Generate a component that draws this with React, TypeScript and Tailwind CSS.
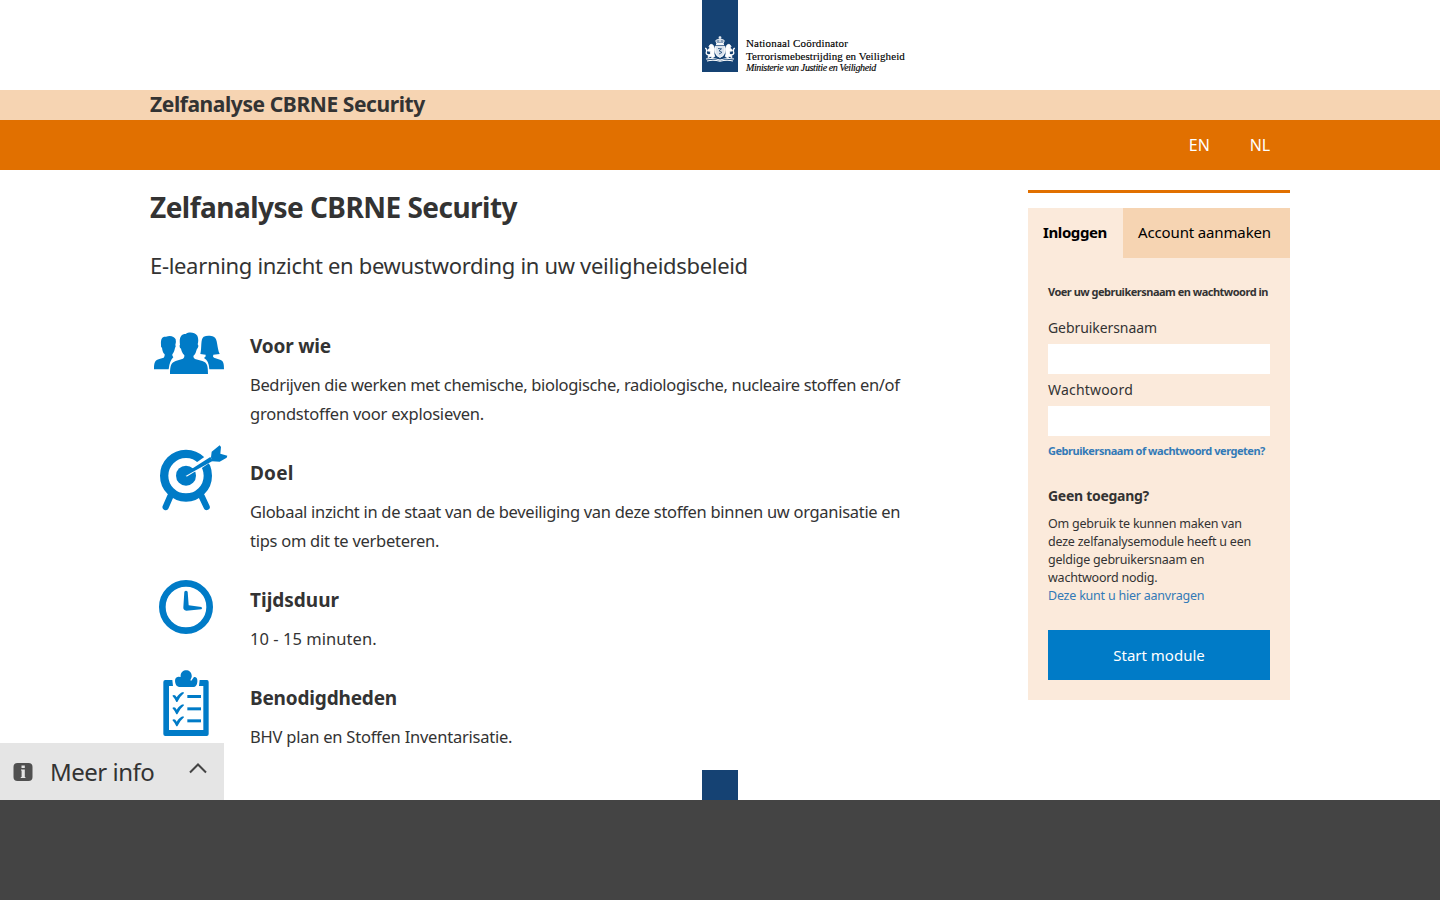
import type { ReactNode } from "react";

const blue = "#007bc7";

function PeopleIcon() {
  return (
    <svg className="h-11 w-[90px] shrink-0" viewBox="30 36 270 132" fill={blue}>
      <path d="M42 148 C42 126 46 120 58 117 L71 113 Q75 109 74 103 C68 98 67 90 66 83 Q62 82 63 74 C62 56 66 49 78 50 C91 45 103 49 107 58 Q109 66 106 75 Q109 78 105 84 C103 94 100 99 97 103 Q96 108 100 112 Q89 122 86 148Z" />
      <path d="M90 162 C90 136 94 128 107 123 L129 116 Q134 111 133 106 C127 100 124 92 123 86 Q118 84 119 76 L120 74 C117 54 122 42 137 42 C148 34 164 37 172 47 Q177 59 173 73 Q177 77 173 84 Q170 87 169 92 C167 100 164 104 160 108 Q160 114 165 117 L187 123 C202 128 204 138 204 162Z" />
      <path d="M181 102 C186 82 181 57 191 50 C200 46 213 47 221 50 C234 56 230 82 239 102 L220 104 Q217 110 222 113 L240 119 C251 122 252 132 252 148 L208 148 Q207 122 192 114 Q199 110 197 104Z" />
    </svg>
  );
}

function TargetIcon() {
  return (
    <svg className="-mt-3.5 h-[67px] w-[90px] shrink-0" viewBox="30 30 270 201" fill="none" stroke={blue}>
      <circle cx="138" cy="122" r="65.5" strokeWidth="25" />
      <circle cx="138" cy="122" r="30" fill={blue} stroke="none" />
      <path d="M91 184 L77 216 M185 184 L200 216" strokeWidth="19" strokeLinecap="round" />
      <path d="M176 92 L222 60" stroke="#fff" strokeWidth="23" />
      <path d="M138 122 L172 101" stroke="#fff" strokeWidth="8" />
      <path d="M133 118 L150 105 L211 66 L219 77 L158 111 L138 122Z" fill={blue} stroke="none" />
      <path d="M213 67 L215 50 L239 31 L243 36 L241 56 L262 62 L260 68 L239 80 L216 79Z" fill={blue} stroke="none" />
    </svg>
  );
}

function ClockIcon() {
  return (
    <svg className="-mt-1.5 h-[55px] w-[90px] shrink-0" viewBox="30 30 270 165" fill={blue}>
      <circle cx="138" cy="111" r="71" fill="none" stroke={blue} strokeWidth="20" />
      <path d="M133 65 Q138 60 143 65 L146 106 L184 111 Q189 115 184 118 L139 122 Q129 121 130 112Z" />
    </svg>
  );
}

function ClipboardIcon() {
  return (
    <svg className="-mt-3.5 h-[67px] w-[90px] shrink-0" viewBox="30 300 270 201" fill={blue}>
      <path fillRule="evenodd" d="M76 330 H97 L99 348 H87 V480 H190 V348 H177 L179 330 H201 Q206 330 206 336 V492 Q206 498 200 498 H76 Q70 498 70 492 V336 Q70 330 76 330Z" />
      <path d="M105 333 Q105 321 115 320 L122 321 C119 294 158 294 155 321 L151 331 L154 332 L162 321 Q173 320 172 335 Q171 350 160 351 H117 Q106 349 105 333Z" />
      {[0, 37, 73].map((dy) => (
        <g key={dy} transform={`translate(0 ${dy})`}>
          <path d="M97 377 Q104 371 110 382 Q119 368 130 366 L132 369 Q121 378 112 396 L109 396 Q105 386 97 377Z" />
          <path d="M142 375 H183 V384 H142Z" />
        </g>
      ))}
    </svg>
  );
}

function Crest() {
  return (
    <svg className="h-[26px] w-8" viewBox="0 0 32 26" fill="none" stroke="#fff">
      <path d="M13 7.5 Q10.5 4 13.5 3.6 Q16 2 18.5 3.6 Q21.5 4 19 7.5Z" fill="#8aa1bb" strokeWidth="0.9" />
      <path d="M16 0 V6 M14.6 1.3 H17.4" strokeWidth="1" />
      <path d="M12 8.2 H20" strokeWidth="1.5" />
      <path d="M11.5 10.2 H20.5 V17 Q20 20 16 21.5 Q12 20 11.5 17Z" fill="#dbe4ee" strokeWidth="0.9" />
      <path d="M14 12.5 L17.5 12.8 L15 14.8 L18 16.4 L15 18" stroke="#154273" strokeWidth="0.8" />
      <path d="M6 8.8 Q8 7.4 9.6 9.8 L10.6 13 L10 18 L10.8 20.5 L8 22 L7 20.2 L4 21.6 L4.5 19.5 L6.5 17.5 L6.3 15.2 L3.5 15 L4.5 13 L6.2 12.2 L5 10.6Z" fill="#fff" strokeWidth="0.8" />
      <path d="M26 8.8 Q24 7.4 22.4 9.8 L21.4 13 L22 18 L21.2 20.5 L24 22 L25 20.2 L28 21.6 L27.5 19.5 L25.5 17.5 L25.7 15.2 L28.5 15 L27.5 13 L25.8 12.2 L27 10.6Z" fill="#fff" strokeWidth="0.8" />
      <path d="M5 19 Q1.2 18.5 2.5 15.5 Q3.3 13.3 1.2 12 M27 19 Q30.8 18.5 29.5 15.5 Q28.7 13.3 30.8 12" strokeWidth="1.3" />
      <path d="M2 23 Q9 21.6 16 24 Q23 21.6 30 23 M3 25 Q9 23.4 16 25.2 Q23 23.4 29 25" strokeWidth="1.1" />
    </svg>
  );
}

function Item({ icon, title, children, titleClass }: { icon: ReactNode; title: string; children: ReactNode; titleClass: string }) {
  return (
    <section className="flex items-start gap-2.5">
      {icon}
      <div>
        <h3 className={`h-7 text-[19px] leading-7 font-bold ${titleClass}`}>{title}</h3>
        <p className="mt-2.5 text-[16.5px] leading-[29px] whitespace-nowrap">{children}</p>
      </div>
    </section>
  );
}

export default function App() {
  return (
    <div className="relative flex h-[900px] w-[1440px] flex-col overflow-hidden bg-white font-['Noto_Sans',sans-serif] text-[#333] [font-variant-ligatures:none]">
      <header>
        <div className="flex h-[90px] gap-2 pl-[702px]">
          <div className="flex h-[72px] w-9 items-end justify-center bg-[#154273] pb-2.5">
            <Crest />
          </div>
          <div className="pt-[37px] font-['Liberation_Serif',serif] text-[11px] leading-[12.5px] whitespace-nowrap text-black [-webkit-text-stroke:0.15px_#000]">
            <p className="tracking-[0.16px]">Nationaal Coördinator</p>
            <p className="tracking-[0.08px]">Terrorismebestrijding en Veiligheid</p>
            <p className="text-[10px] tracking-[-0.38px] italic">Ministerie van Justitie en Veiligheid</p>
          </div>
        </div>
        <div className="h-[30px] bg-[#f6d4b2] pl-[150px] text-[21px] leading-7 font-bold tracking-[-0.41px]">
          Zelfanalyse CBRNE Security
        </div>
        <nav className="flex h-[50px] justify-end gap-10 bg-[#e17000] pr-[170px] text-base leading-[50px] text-white">
          <a>EN</a>
          <a className="tracking-[-0.2px]">NL</a>
        </nav>
      </header>

      <div className="flex h-[600px] items-start justify-between pr-[150px] pl-[150px]">
        <main className="w-[760px]">
          <h1 className="mt-[17px] h-10 text-[28px] leading-10 font-bold tracking-[-0.53px]">Zelfanalyse CBRNE Security</h1>
          <h2 className="mt-[22px] h-8 text-[22px] leading-8 tracking-[-0.32px]">
            E-learning inzicht en bewustwording in uw veiligheidsbeleid
          </h2>
          <div className="mt-[51px] flex flex-col gap-[31px]">
            <Item icon={<PeopleIcon />} title="Voor wie" titleClass="tracking-[-0.18px]">
              <span className="tracking-[-0.34px]">Bedrijven die werken met chemische, biologische, radiologische, nucleaire stoffen en/of</span>
              <br />
              <span className="tracking-[-0.23px]">grondstoffen voor explosieven.</span>
            </Item>
            <Item icon={<TargetIcon />} title="Doel" titleClass="tracking-[0.2px]">
              <span className="tracking-[-0.3px]">Globaal inzicht in de staat van de beveiliging van deze stoffen binnen uw organisatie en</span>
              <br />
              <span className="tracking-[-0.27px]">tips om dit te verbeteren.</span>
            </Item>
            <Item icon={<ClockIcon />} title="Tijdsduur" titleClass="tracking-normal">
              <span className="tracking-[0.05px]">10 - 15 minuten.</span>
            </Item>
            <Item icon={<ClipboardIcon />} title="Benodigdheden" titleClass="tracking-[-0.18px]">
              <span className="tracking-[-0.23px]">BHV plan en Stoffen Inventarisatie.</span>
            </Item>
          </div>
        </main>

        <aside className="mt-5 w-[262px] border-t-3 border-[#e17000] pt-[15px]">
          <div className="h-[492px] bg-[#fbeadb]">
            <div className="flex h-[50px] text-[15px] leading-[48px] text-black">
              <div className="w-[95px] pl-[15px] font-bold tracking-[-0.39px]">Inloggen</div>
              <div className="flex-1 bg-[#f6d4b2] pl-[15px] tracking-[-0.14px]">Account aanmaken</div>
            </div>
            <form className="flex flex-col px-5 whitespace-nowrap">
              <p className="mt-6 h-5 text-[11px] leading-5 font-bold tracking-[-0.5px]">Voer uw gebruikersnaam en wachtwoord in</p>
              <label className="mt-4 h-5 text-[14px] leading-5 tracking-[-0.08px]">Gebruikersnaam</label>
              <input className="mt-1.5 h-[30px] bg-white" />
              <label className="mt-1.5 h-5 text-[14px] leading-5 tracking-[0.19px]">Wachtwoord</label>
              <input type="password" className="mt-1.5 h-[30px] bg-white" />
              <a className="mt-[5px] h-5 text-[11px] leading-5 font-bold tracking-[-0.47px] text-[#337ab7]">Gebruikersnaam of wachtwoord vergeten?</a>
              <h4 className="mt-[25px] h-5 text-[14px] leading-5 font-bold tracking-[-0.28px]">Geen toegang?</h4>
              <p className="mt-[9px] text-[12.5px] leading-[18px] tracking-[-0.22px]">
                Om gebruik te kunnen maken van<br />
                deze zelfanalysemodule heeft u een<br />
                geldige gebruikersnaam en<br />
                wachtwoord nodig.<br />
                <a className="text-[#337ab7]">Deze kunt u hier aanvragen</a>
              </p>
              <button type="button" className="mt-[25px] h-[50px] bg-[#007bc7] text-[15px] leading-[50px] text-white">Start module</button>
            </form>
          </div>
        </aside>
      </div>

      <div className="h-[30px] pl-[702px]">
        <div className="h-[30px] w-9 bg-[#154273]" />
      </div>
      <footer className="h-[100px] bg-[#444]" />

      <div className="absolute top-[743px] left-0 flex h-[57px] w-56 items-center bg-[#e5e5e5] pl-[13px]">
        <svg className="h-5 w-5" viewBox="0 0 20 20">
          <rect x="0.5" y="1" width="19" height="18" rx="4" fill="#505050" />
          <path d="M8.5 3.5 H11.8 V6 H8.5Z M8 7.4 H11.8 V15 H12.4 V16 H7.8 V15 H8.6 V8.4 H8Z" fill="#e5e5e5" />
        </svg>
        <span className="ml-[17px] w-[139px] text-2xl leading-[57px] tracking-[-0.5px]">Meer info</span>
        <svg className="-mt-[7px] h-3 w-[18px]" viewBox="0 0 18 12" fill="none" stroke="#444" strokeWidth="2">
          <path d="M1 10.5 L9 2.5 L17 10.5" />
        </svg>
      </div>
    </div>
  );
}
